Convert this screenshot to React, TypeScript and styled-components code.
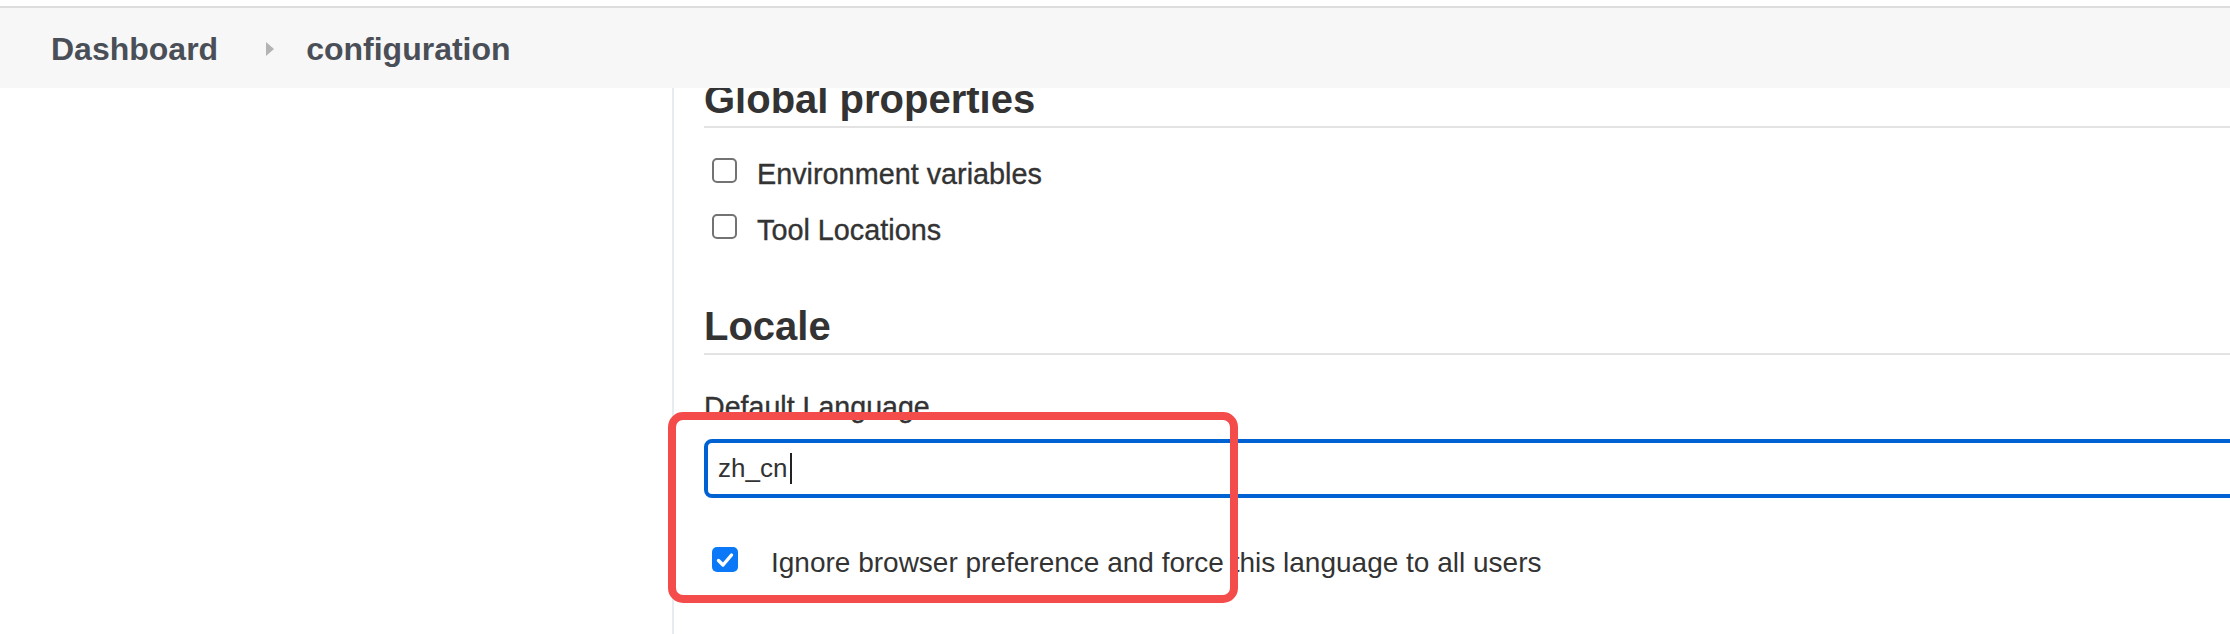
import React from "react";
import styled, { createGlobalStyle } from "styled-components";

const GlobalStyle = createGlobalStyle`
  html, body {
    margin: 0;
    padding: 0;
    background: #ffffff;
  }
  body {
    font-family: "Liberation Sans", Arial, Helvetica, sans-serif;
    color: #333333;
    overflow: hidden;
  }
`;

const Page = styled.div`
  width: 100%;
  height: 634px;
  display: flex;
  flex-direction: column;
  overflow: hidden;
  background: #ffffff;
`;

const Breadcrumbs = styled.nav`
  position: relative;
  z-index: 2;
  margin-top: 6px;
  height: 82px;
  box-sizing: border-box;
  border-top: 2px solid #dddddd;
  background: #f7f7f7;
  display: flex;
  align-items: center;
  padding-left: 51px;
  padding-top: 2px;
  flex-shrink: 0;
`;

const Crumb = styled.span`
  font-size: 32px;
  font-weight: 700;
  color: #4a4f57;
  white-space: nowrap;
`;

const CrumbArrow = styled.span`
  width: 0;
  height: 0;
  border-left: 8px solid #b3b3b3;
  border-top: 7px solid transparent;
  border-bottom: 7px solid transparent;
  margin: 0 32px 0 48px;
`;

const Body = styled.div`
  flex: 1;
  display: flex;
  overflow: hidden;
  min-height: 0;
`;

const SidePanel = styled.aside`
  width: 672px;
  flex-shrink: 0;
`;

const Main = styled.main`
  flex: 1;
  min-width: 0;
  border-left: 2px solid #e7ecf1;
  padding-left: 30px;
  display: flex;
  flex-direction: column;
`;

const SectionTitle = styled.h2<{ $top: number }>`
  margin: ${(p) => p.$top}px 0 0 0;
  font-size: 40px;
  line-height: 48px;
  font-weight: 700;
  color: #333333;
  padding-bottom: 3px;
  border-bottom: 2px solid #e3e3e3;
  white-space: nowrap;
`;

const CheckList = styled.div`
  margin-top: 26px;
  display: flex;
  flex-direction: column;
  gap: 16px;
`;

const CheckRow = styled.label<{ $gap: number; $top?: number; $size?: number }>`
  display: flex;
  align-items: flex-start;
  height: 40px;
  line-height: 40px;
  font-size: ${(p) => p.$size ?? 28}px;
  color: #333333;
  padding-left: 8px;
  gap: ${(p) => p.$gap}px;
  margin-top: ${(p) => p.$top ?? 0}px;
  white-space: nowrap;
`;

const Box = styled.span<{ $checked?: boolean }>`
  width: ${(p) => (p.$checked ? 26 : 25)}px;
  height: 25px;
  margin-top: 4px;
  box-sizing: border-box;
  border-radius: 5px;
  flex-shrink: 0;
  display: flex;
  align-items: center;
  justify-content: center;
  border: ${(p) => (p.$checked ? "none" : "2px solid #737373")};
  background: ${(p) => (p.$checked ? "#0b78f7" : "#ffffff")};
`;

const MediumText = styled.span`
  -webkit-text-stroke: 0.35px currentColor;
`;

const FieldBlock = styled.div`
  position: relative;
  margin-top: 32px;
  display: flex;
  flex-direction: column;
`;

const FieldLabel = styled.div`
  font-size: 28.6px;
  line-height: 40px;
  color: #333333;
  -webkit-text-stroke: 0.35px currentColor;
  white-space: nowrap;
`;

const TextInput = styled.div`
  margin-top: 12px;
  margin-right: -60px;
  height: 59px;
  box-sizing: border-box;
  border: 4px solid #0061d3;
  border-radius: 8px;
  display: flex;
  align-items: center;
  padding-left: 10px;
  font-size: 26px;
  color: #333333;
  background: #ffffff;
`;

const Caret = styled.span`
  width: 2px;
  height: 31px;
  margin-left: 3px;
  background: #222222;
`;

const Highlight = styled.div`
  position: absolute;
  left: -36px;
  top: 25px;
  width: 570px;
  height: 191px;
  box-sizing: border-box;
  border: 8px solid #f34c4a;
  border-radius: 15px;
  pointer-events: none;
`;

const CheckMark = () => (
  <svg width="18" height="16" viewBox="0 0 18 16" aria-hidden="true">
    <polyline
      points="2.5,8.5 7,13 15.5,3"
      fill="none"
      stroke="#ffffff"
      strokeWidth="3.4"
      strokeLinecap="round"
      strokeLinejoin="round"
    />
  </svg>
);

export default function App() {
  return (
    <>
      <GlobalStyle />
      <Page>
        <Breadcrumbs>
          <Crumb>Dashboard</Crumb>
          <CrumbArrow />
          <Crumb>configuration</Crumb>
        </Breadcrumbs>
        <Body>
          <SidePanel />
          <Main>
            <SectionTitle $top={-13}>Global properties</SectionTitle>
            <CheckList>
              <CheckRow $gap={20} $size={28.8}>
                <Box />
                <MediumText>Environment variables</MediumText>
              </CheckRow>
              <CheckRow $gap={20} $size={28.8}>
                <Box />
                <MediumText>Tool Locations</MediumText>
              </CheckRow>
            </CheckList>
            <SectionTitle $top={52}>Locale</SectionTitle>
            <FieldBlock>
              <FieldLabel>Default Language</FieldLabel>
              <TextInput>
                zh_cn
                <Caret />
              </TextInput>
              <CheckRow $gap={33} $top={45}>
                <Box $checked>
                  <CheckMark />
                </Box>
                <span>Ignore browser preference and force this language to all users</span>
              </CheckRow>
              <Highlight />
            </FieldBlock>
          </Main>
        </Body>
      </Page>
    </>
  );
}
